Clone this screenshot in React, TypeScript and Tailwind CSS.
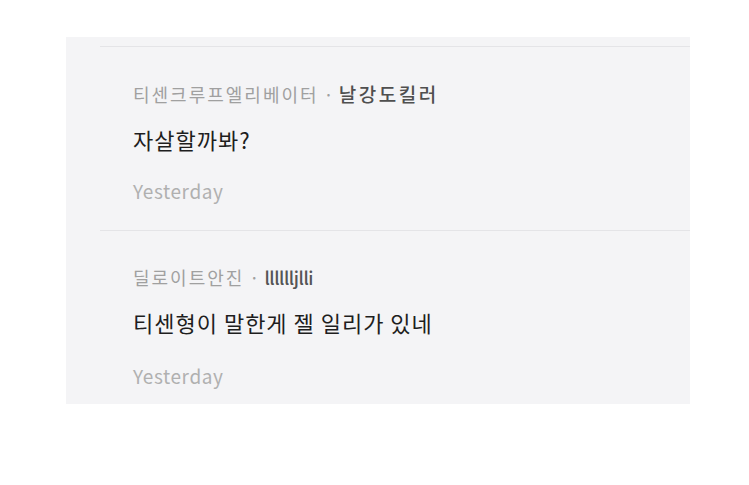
import React from "react";

type Comment = {
  group: string;
  author: string;
  body: string;
  time: string;
};

const comments: Comment[] = [
  { group: "티센크루프엘리베이터", author: "날강도킬러", body: "자살할까봐?", time: "Yesterday" },
  { group: "딜로이트안진", author: "lllllljlli", body: "티센형이 말한게 젤 일리가 있네", time: "Yesterday" },
];

const font = { fontFamily: '"Noto Sans CJK KR", "Noto Sans", sans-serif' };

export default function App() {
  return (
    <div className="w-[749px] h-[485px] bg-white pt-[37px] pl-[66px]" style={font}>
      <div className="w-[624px] bg-[#f4f4f6]">
        <div className="ml-[34px] pt-[9px]">
          {comments.map((c, i) => (
            <div
              key={i}
              className={
                i === 0
                  ? "border-t border-b border-[#e4e4e7] pl-[33px] pt-[35px] pb-[27px]"
                  : "pl-[33px] pt-[34px] pb-[16px]"
              }
            >
              <div className="text-[18px] leading-[24px] text-[#a0a0a0]">
                <span className="tracking-[2px]">{c.group}</span>
                <span className="mx-[5px]">·</span>
                <span
                  className={
                    i === 0
                      ? "text-[19px] tracking-[2.5px] text-[#4f4f4f] font-medium"
                      : "tracking-[-0.5px] text-[#555555] font-medium"
                  }
                >
                  {c.author}
                </span>
              </div>
              <div className="mt-[19px] text-[22px] leading-[28px] tracking-[1px] text-[#1e1e1e]">{c.body}</div>
              <div className={`${i === 0 ? "mt-[26px]" : "mt-[28px]"} text-[19px] leading-[24px] tracking-[0.6px] text-[#b0b0b0]`}>
                {c.time}
              </div>
            </div>
          ))}
        </div>
      </div>
    </div>
  );
}
